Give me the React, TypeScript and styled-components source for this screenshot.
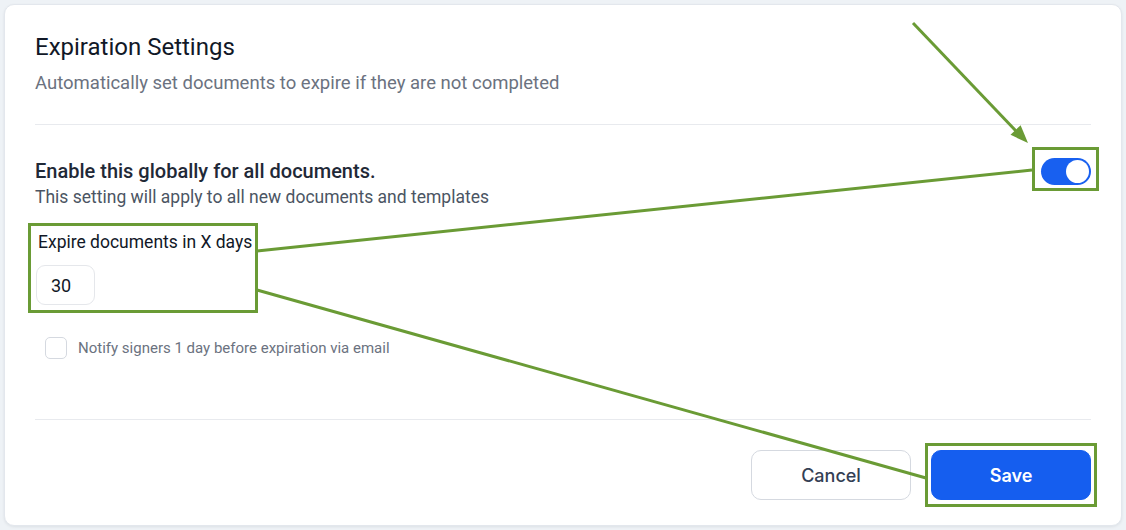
import styled, { createGlobalStyle } from "styled-components";

const GlobalStyle = createGlobalStyle`
  html, body {
    margin: 0;
    padding: 0;
    background: #eef2f6;
  }
  body {
    font-family: Roboto, "Noto Sans", Arial, sans-serif;
  }
`;

const ANNOT = "#6a9b35";

export default function App() {
  return (
    <Page>
      <GlobalStyle />
      <Card>
        <Header>
          <Title>Expiration Settings</Title>
          <Subtitle>Automatically set documents to expire if they are not completed</Subtitle>
        </Header>
        <Divider />
        <Body>
          <SettingRow>
            <div>
              <SettingTitle>Enable this globally for all documents.</SettingTitle>
              <SettingHint>This setting will apply to all new documents and templates</SettingHint>
            </div>
            <Toggle role="switch" aria-checked="true">
              <Knob />
            </Toggle>
          </SettingRow>
          <Field>
            <FieldLabel>Expire documents in X days</FieldLabel>
            <NumberInput defaultValue="30" />
          </Field>
          <CheckRow>
            <CheckBox />
            <CheckLabel>Notify signers 1 day before expiration via email</CheckLabel>
          </CheckRow>
        </Body>
        <Divider />
        <Footer>
          <Button>Cancel</Button>
          <Button $primary>Save</Button>
        </Footer>
      </Card>
      {/* annotation overlay: boxes, connector lines and arrow */}
      <Overlay width="1126" height="530" viewBox="0 0 1126 530">
        <g fill="none" stroke={ANNOT} strokeWidth="3">
          <rect x="1033.5" y="148.5" width="64" height="41" />
          <rect x="29.5" y="224.5" width="227" height="87" />
          <rect x="926.5" y="444.5" width="169" height="61" />
          <line x1="1032" y1="170" x2="257" y2="251" />
          <line x1="257" y1="290" x2="926" y2="478" />
          <line x1="913" y1="23" x2="1016" y2="131" />
        </g>
        <polygon points="1028,143 1010.5,134.8 1020.6,125.2" fill={ANNOT} />
      </Overlay>
    </Page>
  );
}

const Page = styled.div`
  position: relative;
  width: 1126px;
  height: 530px;
  padding: 4px;
  box-sizing: border-box;
`;

const Card = styled.div`
  box-sizing: border-box;
  width: 1118px;
  height: 522px;
  background: #ffffff;
  border: 1px solid #e3e7ed;
  border-radius: 10px;
  box-shadow: 0 1px 3px rgba(16, 24, 40, 0.08);
  padding: 28px 30px 0 30px;
  display: flex;
  flex-direction: column;
`;

const Header = styled.div`
  display: flex;
  flex-direction: column;
  gap: 10px;
`;

const Title = styled.h2`
  margin: 0;
  font-size: 24px;
  line-height: 28px;
  font-weight: 400;
  color: #111827;
`;

const Subtitle = styled.p`
  margin: 0;
  font-size: 18.5px;
  line-height: 24px;
  color: #6b7280;
`;

const Divider = styled.hr`
  margin: 29px 0 0 0;
  border: none;
  border-top: 1px solid #e8eaee;
  height: 0;
`;

const Body = styled.div`
  padding-top: 33px;
  padding-bottom: 31px;
  display: flex;
  flex-direction: column;
`;

const SettingRow = styled.div`
  display: flex;
  justify-content: space-between;
  align-items: flex-start;
`;

const SettingTitle = styled.div`
  font-size: 20px;
  line-height: 26px;
  font-weight: 500;
  color: #1f2937;
`;

const SettingHint = styled.div`
  font-size: 17.5px;
  line-height: 26px;
  color: #4b5563;
`;

const Toggle = styled.div`
  width: 50px;
  height: 27px;
  border-radius: 14px;
  background: #1860f0;
  display: flex;
  align-items: center;
  justify-content: flex-end;
  padding: 2px;
  box-sizing: border-box;
`;

const Knob = styled.div`
  width: 23px;
  height: 23px;
  border-radius: 50%;
  background: #ffffff;
`;

const Field = styled.div`
  margin-top: 20px;
  display: flex;
  flex-direction: column;
  align-items: flex-start;
  gap: 11px;
`;

const FieldLabel = styled.label`
  padding-left: 3px;
  font-size: 17.5px;
  line-height: 24px;
  color: #111827;
`;

const NumberInput = styled.input`
  margin-left: 1px;
  width: 59px;
  height: 40px;
  box-sizing: border-box;
  border: 1px solid #e5e7eb;
  border-radius: 9px;
  padding: 0 14px;
  font-family: Roboto, sans-serif;
  font-size: 18px;
  color: #111827;
  outline: none;
`;

const CheckRow = styled.div`
  margin-top: 32px;
  padding-left: 10px;
  display: flex;
  align-items: center;
  gap: 11px;
`;

const CheckBox = styled.span`
  width: 22px;
  height: 22px;
  box-sizing: border-box;
  border: 1px solid #d5d9e0;
  border-radius: 5px;
  background: #fff;
`;

const CheckLabel = styled.span`
  font-size: 15px;
  line-height: 20px;
  color: #6b7280;
`;

const Footer = styled.div`
  margin-top: 30px;
  display: flex;
  justify-content: flex-end;
  gap: 20px;
`;

const Button = styled.button<{ $primary?: boolean }>`
  width: 160px;
  height: 50px;
  border-radius: 10px;
  font-family: Inter, Roboto, sans-serif;
  font-size: 18px;
  font-weight: ${(p) => (p.$primary ? 600 : 500)};
  cursor: pointer;
  border: 1px solid ${(p) => (p.$primary ? "#155eef" : "#d5d9e0")};
  background: ${(p) => (p.$primary ? "#155eef" : "#ffffff")};
  color: ${(p) => (p.$primary ? "#ffffff" : "#344054")};
`;

const Overlay = styled.svg`
  position: absolute;
  top: 0;
  left: 0;
  pointer-events: none;
`;
